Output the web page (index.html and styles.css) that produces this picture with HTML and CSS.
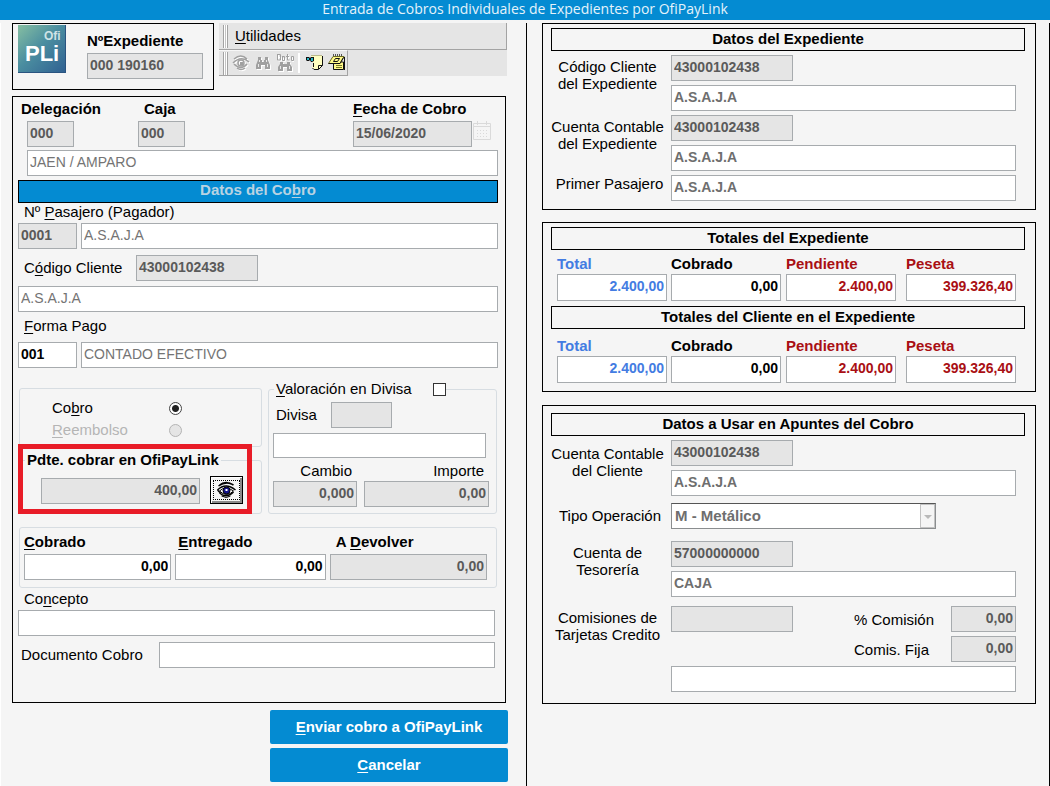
FILE: index.html
```html
<!DOCTYPE html>
<html lang="es">
<head>
<meta charset="utf-8">
<meta name="viewport" content="width=device-width, initial-scale=1">
<title>Entrada de Cobros Individuales de Expedientes por OfiPayLink</title>
<link rel="stylesheet" href="styles.css">
</head>
<body>
<header class="titlebar"><h1>Entrada de Cobros Individuales de Expedientes por OfiPayLink</h1></header>
<main class="window">
  <section class="left">
    <div class="top">
      <div class="panel file">
        <svg class="logo" width="48" height="48" viewBox="0 0 48 48" role="img" aria-label="Ofi PLi">
          <defs>
            <linearGradient id="logo-bg" x1="0" y1="0" x2="1" y2="1">
              <stop offset="0" stop-color="#86bfa2"/><stop offset=".45" stop-color="#4b8ea0"/><stop offset="1" stop-color="#2f5f91"/>
            </linearGradient>
          </defs>
          <rect width="48" height="48" fill="url(#logo-bg)"/>
          <path d="M0 47.500H47.500V0" fill="none" stroke="#2a5480"/>
          <text class="logo-small" x="26" y="15">Ofi</text>
          <text class="logo-big" x="7" y="36">PLi</text>
        </svg>
        <div class="file-field">
          <label class="strong" for="expediente">NºExpediente</label>
          <input class="box gray" id="expediente" value="000 190160" readonly>
        </div>
      </div>
      <div class="toolbars">
        <div class="menubar"><span class="grip"></span><button class="menu" type="button"><u>U</u>tilidades</button></div>
        <div class="toolbar">
          <span class="grip"></span>
          <button class="tool" type="button" aria-label="Ver" disabled>
            <svg width="18" height="18" viewBox="0 0 18 18" fill="none" stroke-width="1.500">
              <g stroke="#fff" transform="translate(1 1)"><path d="M2 5Q9-1 15 5M1 9Q9 1 17 8M2 10Q9 17 15 10M5 14Q9 17 13 14"/><circle cx="9" cy="9" r="3"/></g>
              <g stroke="#a0a0a0"><path d="M2 5Q9-1 15 5M1 9Q9 1 17 8M2 10Q9 17 15 10M5 14Q9 17 13 14"/><circle cx="9" cy="9" r="3"/></g>
              <path d="M8 8h3v3H8z" fill="#a0a0a0"/>
            </svg>
          </button>
          <button class="tool" type="button" aria-label="Buscar" disabled>
            <svg width="18" height="18" viewBox="0 0 18 18">
              <path d="M4 3h3v3h1v2h2V6h1V3h3v3l2 5v4h-5v-4H7v4H2v-4l2-5z" fill="#fff" transform="translate(1 1)"/>
              <path d="M4 3h3v3h1v2h2V6h1V3h3v3l2 5v4h-5v-4H7v4H2v-4l2-5z" fill="#a0a0a0"/>
              <path d="M5.500 6v2M4.500 10v3M12.500 6v2M13.500 10v3" stroke="#e8e8e8"/>
            </svg>
          </button>
          <button class="tool" type="button" aria-label="Buscar dato" disabled>
            <svg width="18" height="18" viewBox="0 0 18 18" fill="none">
              <g stroke="#fff" transform="translate(1 1)"><path d="M1.500 0v6h3V2.500h-3M6.500 3v3.500h2V3.500h-2M11.500 0v6h2M10 2.500h3M15.500 2.500h2v4h-2z"/></g>
              <path d="M1.500 0v6h3V.500h-3M6.500 2v4.500h2V2.500h-2M11.500 0v6h2M10 2.500h3M15.500 2.500h2v4h-2z" stroke="#a0a0a0"/>
              <path d="M4 8h3v2h4V8h3v2l2 3v4h-5v-4H7v4H2v-4l2-3z" fill="#fff" transform="translate(1 1)"/>
              <path d="M4 8h3v2h4V8h3v2l2 3v4h-5v-4H7v4H2v-4l2-3z" fill="#a0a0a0"/>
              <path d="M4.500 12v3M13.500 12v3" stroke="#e8e8e8"/>
            </svg>
          </button>
          <span class="divider"></span>
          <button class="tool" type="button" aria-label="Ver nota">
            <svg width="18" height="18" viewBox="0 0 18 18">
              <path d="M5 2h11v9l-3 4H8l-2-2 1-3z" fill="#ffffc0"/>
              <path d="M5 1.500h11" stroke="#b9b98c"/>
              <path d="M16.500 2v9.500l-4 4H8L6.500 14M12.500 15v-3.500h4M7.500 9v4" fill="none" stroke="#111"/>
              <path d="M0 3h3l1 1 1-1h3v4L6 8H5L4 6 3 7H1L0 6z" fill="#111"/>
              <path d="M1 4h2v2H1zM5 4h2v3H5z" fill="#27b8c4"/>
            </svg>
          </button>
          <button class="tool" type="button" aria-label="Notas">
            <svg width="18" height="18" viewBox="0 0 18 18">
              <path d="M5.500 8h10v7.500h-10z" fill="#fff98a" stroke="#111"/>
              <path d="M5 2.500h11l-4 7H.500z" fill="#fff98a" stroke="#6b6b20"/>
              <path d="M.500 9.500H12l3.500-6" fill="none" stroke="#111"/>
              <path d="M7.500 4.500h4l-2 3h-4z" fill="none" stroke="#111"/>
              <path d="M8 11.500h6M8 13.500h6" stroke="#77772a"/>
              <path d="M5.500 0v2M7.500 0v2M9.500 0v2M11.500 0v2M13.500 0v2" stroke="#555"/>
              <path d="M16.500 3v13" stroke="#111"/>
            </svg>
          </button>
        </div>
      </div>
    </div>

    <form class="panel form" id="cobro-form">
      <div class="head">
        <div>
          <label class="strong head-label" for="delegacion">Delegación</label>
          <input class="box gray code indent" id="delegacion" value="000" readonly>
        </div>
        <div>
          <label class="strong head-label wide" for="caja">Caja</label>
          <input class="box gray code" id="caja" value="000" readonly>
        </div>
        <div>
          <label class="strong head-label flush" for="fecha"><u>F</u>echa de Cobro</label>
          <div class="date">
            <input class="box gray" id="fecha" value="15/06/2020" readonly>
            <button class="calendar" type="button" aria-label="Calendario" disabled>
              <svg width="18" height="20" viewBox="0 0 18 20" fill="none" stroke="#dadada">
                <path d="M.5 2.500h17v16H.5zM.5 5.500h17M4.500 0v4M13.500 0v4"/>
                <path d="M4 9.500h11M4 12.500h11M4 15.500h11" stroke-dasharray="1 2"/>
              </svg>
            </button>
          </div>
        </div>
      </div>
      <div class="office"><input class="box soft" aria-label="Nombre de la delegación" value="JAEN / AMPARO" readonly></div>
      <h2 class="bar">Datos del Co<u>b</u>ro</h2>
      <label class="caption" for="pasajero">Nº <u>P</u>asajero (Pagador)</label>
      <div class="pair">
        <input class="box gray" id="pasajero" value="0001" readonly>
        <input class="box soft" aria-label="Nombre del pasajero" value="A.S.A.J.A" readonly>
      </div>
      <div class="client">
        <label for="cliente">C<u>ó</u>digo Cliente</label>
        <input class="box gray account" id="cliente" value="43000102438" readonly>
      </div>
      <input class="box soft" aria-label="Nombre del cliente" value="A.S.A.J.A" readonly>
      <label class="caption pay" for="forma"><u>F</u>orma Pago</label>
      <div class="pair">
        <input class="box" id="forma" value="001">
        <input class="box soft" aria-label="Descripción de la forma de pago" value="CONTADO EFECTIVO" readonly>
      </div>

      <div class="groups">
        <div class="stack">
          <div class="group kinds" role="radiogroup" aria-label="Tipo">
            <label for="tipo-cobro">Co<u>b</u>ro</label>
            <input class="radio" type="radio" name="tipo" id="tipo-cobro" checked>
            <label class="off" for="tipo-reembolso"><u>R</u>eembolso</label>
            <input class="radio" type="radio" name="tipo" id="tipo-reembolso" disabled>
          </div>
          <fieldset class="group pending">
            <legend><label class="strong" for="pendiente">Pdte. cobrar en OfiPayLink</label></legend>
            <div class="pending-row">
              <input class="box gray num" id="pendiente" value="400,00" readonly>
              <button class="eye" type="button" aria-label="Ver pendiente">
                <svg width="20" height="18" viewBox="0 0 20 18" fill="none" stroke="#000">
                  <path d="M3 4Q9-1 17 4M2 5Q9 0 15 3" stroke-width="1.500"/>
                  <path d="M1 9Q9 1 19 9M3 12Q10 18 17 11M1 9l3 3" stroke-width="1.500"/>
                  <path d="M3 10Q9 4 17 10Q10 17 3 10z" fill="#fff"/>
                  <circle cx="10" cy="9.500" r="3.500" fill="#14148c"/>
                  <path d="M9 8h2v2H9z" fill="#fff" stroke="none"/>
                  <path d="M5 15Q10 18 14 15"/>
                </svg>
              </button>
            </div>
            <span class="highlight"></span>
          </fieldset>
        </div>
        <fieldset class="group currency">
          <legend class="toggle"><label for="valoracion"><u>V</u>aloración en Divisa</label><input class="check" type="checkbox" id="valoracion"></legend>
          <div class="currency-code"><label for="divisa">Divisa</label><input class="box gray" id="divisa" readonly></div>
          <input class="box currency-name" aria-label="Nombre de la divisa">
          <div class="rates">
            <div><label for="cambio">Cambio</label><input class="box gray num" id="cambio" value="0,000" readonly></div>
            <div><label for="importe">Importe</label><input class="box gray num" id="importe" value="0,00" readonly></div>
          </div>
        </fieldset>
      </div>

      <div class="group amounts">
        <div><label class="strong" for="cobrado"><u>C</u>obrado</label><input class="box num" id="cobrado" value="0,00"></div>
        <div><label class="strong inset" for="entregado"><u>E</u>ntregado</label><input class="box num" id="entregado" value="0,00"></div>
        <div><label class="strong inset-more" for="devolver">A <u>D</u>evolver</label><input class="box gray num" id="devolver" value="0,00" readonly></div>
      </div>

      <div class="notes">
        <label class="concept" for="concepto">Co<u>n</u>cepto</label>
        <input class="box" id="concepto">
        <div class="document"><label for="documento">Documento Cobro</label><input class="box" id="documento"></div>
      </div>
    </form>

    <div class="actions">
      <button class="action" type="submit" form="cobro-form"><u>E</u>nviar cobro a OfiPayLink</button>
      <button class="action" type="button"><u>C</u>ancelar</button>
    </div>
  </section>

  <section class="right">
    <div class="panel block">
      <h2 class="title">Datos del Expediente</h2>
      <div class="rows">
        <label class="two" for="exp-cliente">Código Cliente<br>del Expediente</label>
        <div class="stacked">
          <input class="box gray account" id="exp-cliente" value="43000102438" readonly>
          <input class="box dim" aria-label="Nombre del cliente del expediente" value="A.S.A.J.A" readonly>
        </div>
        <label class="two" for="exp-cuenta">Cuenta Contable<br>del Expediente</label>
        <div class="stacked">
          <input class="box gray account" id="exp-cuenta" value="43000102438" readonly>
          <input class="box dim" aria-label="Nombre de la cuenta" value="A.S.A.J.A" readonly>
        </div>
        <label class="one" for="primer">Primer Pasajero</label>
        <input class="box dim" id="primer" value="A.S.A.J.A" readonly>
      </div>
    </div>

    <div class="panel block totals-block">
      <h2 class="title">Totales del Expediente</h2>
      <div class="totals">
        <div class="blue"><label for="t1">Total</label><input class="box tall num" id="t1" value="2.400,00" readonly></div>
        <div><label for="t2">Cobrado</label><input class="box tall num" id="t2" value="0,00" readonly></div>
        <div class="red"><label for="t3">Pendiente</label><input class="box tall num" id="t3" value="2.400,00" readonly></div>
        <div class="red"><label for="t4">Peseta</label><input class="box tall num" id="t4" value="399.326,40" readonly></div>
      </div>
      <h2 class="title second">Totales del Cliente en el Expediente</h2>
      <div class="totals">
        <div class="blue"><label for="c1">Total</label><input class="box tall num" id="c1" value="2.400,00" readonly></div>
        <div><label for="c2">Cobrado</label><input class="box tall num" id="c2" value="0,00" readonly></div>
        <div class="red"><label for="c3">Pendiente</label><input class="box tall num" id="c3" value="2.400,00" readonly></div>
        <div class="red"><label for="c4">Peseta</label><input class="box tall num" id="c4" value="399.326,40" readonly></div>
      </div>
    </div>

    <div class="panel block entries">
      <h2 class="title">Datos a Usar en Apuntes del Cobro</h2>
      <div class="rows">
        <label class="two" for="ap-cuenta">Cuenta Contable<br>del Cliente</label>
        <div class="stacked">
          <input class="box gray account" id="ap-cuenta" value="43000102438" readonly>
          <input class="box dim" aria-label="Nombre del cliente" value="A.S.A.J.A" readonly>
        </div>
      </div>
      <div class="rows operation">
        <label class="one" for="tipo-op">Tipo Operación</label>
        <div class="combo">
          <select id="tipo-op" disabled><option>M - Metálico</option></select>
          <span class="arrow"></span>
        </div>
      </div>
      <div class="rows treasury">
        <label class="two" for="tesoreria">Cuenta de<br>Tesorería</label>
        <div class="stacked">
          <input class="box gray account" id="tesoreria" value="57000000000" readonly>
          <input class="box dim" aria-label="Nombre de la cuenta de tesorería" value="CAJA" readonly>
        </div>
      </div>
      <div class="rows fees">
        <label class="two" for="comisiones">Comisiones de<br>Tarjetas Credito</label>
        <div class="stacked">
          <div class="fee"><input class="box gray account" id="comisiones" readonly><label for="pct">% Comisión</label><input class="box gray num rate" id="pct" value="0,00" readonly></div>
          <div class="fee"><label for="fija">Comis. Fija</label><input class="box gray num rate" id="fija" value="0,00" readonly></div>
          <input class="box" aria-label="Descripción de comisiones" readonly>
        </div>
      </div>
    </div>
  </section>
</main>
</body>
</html>
```
FILE: styles.css
```css
*, *::before, *::after { box-sizing: border-box; }

body {
  margin: 0;
  min-height: 100vh;
  display: flex;
  flex-direction: column;
  background: #f5f5f5;
  color: #000;
  font: 15px/18px "Liberation Sans", Arial, sans-serif;
}

input, button, select { font: inherit; color: inherit; margin: 0; }
h1, h2 { margin: 0; font-size: 15px; }
u { text-underline-offset: 2px; text-decoration-thickness: 1px; }
.strong { font-weight: bold; }

.titlebar { background: #048bd2; height: 20px; }
.titlebar h1 {
  color: #e4f3fb;
  font: 14px/18px "Open Sans", "Noto Sans", sans-serif;
  text-align: center;
}

.window {
  flex: 1;
  margin-top: 3px;
  display: grid;
  grid-template-columns: 526fr 524fr;
}
.left { padding: 0 18px 4px 11px; border-left: 1px solid #fff; }
.right {
  padding: 0 13px 0 15px;
  border: solid #000;
  border-width: 0 1px;
}

.panel { border: 1px solid #000; }

/* Text boxes */
.box {
  display: block;
  width: 100%;
  min-width: 0;
  height: 26px;
  padding: 0 2px 3px;
  border: 1px solid #a7abae;
  border-radius: 0;
  background: #fff;
  font-size: 14px;
  font-weight: bold;
  outline: 0;
}
.gray { background: #e5e5e5; color: #5a5a5a; }
.soft { color: #747474; font-weight: normal; }
.dim { color: #6e6e6e; }
.num { text-align: right; }
.tall { height: 27px; }
.account { width: 122px; }

/* Header row */
.top { display: flex; align-items: flex-start; gap: 5px; margin-right: 1px; }
.file { display: flex; gap: 21px; width: 202px; height: 67px; padding: 1px 10px 0 5px; }
.logo { flex: none; }
.logo text { fill: #fff; font-family: "Liberation Sans", Arial, sans-serif; }
.logo .logo-small { font-size: 12px; font-weight: bold; fill: #cfe3e6; }
.logo-big { font-size: 22px; font-weight: bold; }
.file-field { flex: 1; min-width: 0; padding-top: 7px; }
.file-field label { display: block; line-height: 18px; margin-bottom: 3px; }

.toolbars { flex: 1; background: #e5e5e5; }
.menubar, .toolbar { display: flex; align-items: center; border: solid #a3a3a3; border-width: 0 1px 1px 0; padding-left: 4px; }
.menubar { height: 27px; }
.toolbar { width: 129px; height: 26px; gap: 3px; border-top: 1px solid #f7f7f7; }
.grip {
  flex: none;
  width: 5px;
  height: 23px;
  border: solid #a3a3a3;
  border-width: 0 1px;
  background: linear-gradient(to right, #fff 1px, #e5e5e5 1px, #a3a3a3 2px, #fff 2px);
}
.menu { padding: 0 7px; border: 0; background: none; }
.tool { flex: none; width: 19px; height: 20px; padding: 0; border: 0; background: none; }
.toolbar .grip { margin-right: 1px; }
.tool svg, .eye svg, .calendar svg { display: block; }
.divider { width: 2px; height: 20px; border: solid; border-width: 0 1px; border-color: #a3a3a3 #fff; margin-right: 3px; }

/* Payment form */
.form { margin: 6px 2px 0 0; padding: 0 7px 34px 5px; }
.head { display: grid; grid-template-columns: 120px 1fr 145px; }
.head-label { display: block; line-height: 24px; padding-left: 3px; }
.head-label.wide { padding-left: 6px; }
.head-label.flush { padding-left: 0; }
.code { width: 47px; }
.indent { margin-left: 9px; }
.date { display: flex; gap: 1px; }
.date .box { width: 119px; }
.calendar { width: 18px; height: 20px; padding: 0; border: 0; background: none; }
.office { padding: 3px 0 4px 9px; }
.bar {
  height: 23px;
  border: 1px solid #000;
  background: #048bd2;
  color: #b9d3e2;
  line-height: 18px;
  text-align: center;
}
.caption { display: block; padding-left: 6px; line-height: 18px; margin-bottom: 2px; }
.caption.pay { padding-top: 5px; margin-bottom: 7px; }
.pair { display: grid; grid-template-columns: 59px 1fr; gap: 4px; }
.client { display: grid; grid-template-columns: 112px 1fr; align-items: center; padding: 6px 0 5px 6px; }

.group { min-width: 0; margin: 0; border: 1px solid #d7dde2; border-radius: 3px; }
.groups { display: grid; grid-template-columns: 243fr 229fr; gap: 6px; margin: 12px 1px 13px; }
.stack { display: flex; flex-direction: column; gap: 4px; padding-top: 8px; }
.kinds {
  display: grid;
  grid-template-columns: 117px 1fr;
  align-items: center;
  padding: 8px 0 5px 32px;
  line-height: 22px;
}
.radio {
  appearance: none;
  width: 13px;
  height: 13px;
  border: 1px solid #444;
  border-radius: 50%;
  background: #fff;
}
.radio:checked { background: radial-gradient(circle, #222 3px, #fff 4px); }
.radio:disabled { background: #e5e5e5; border-color: #b4b4b4; }
.off { color: #b5b5b5; }

.pending { position: relative; padding: 0 18px 9px 5px; }
.pending legend { padding: 0 2px; }
.pending-row { display: flex; align-items: flex-end; gap: 10px; padding: 7px 0 0 16px; }
.pending-row .box { flex: 1; margin-bottom: 0; }
.eye {
  flex: none;
  width: 33px;
  height: 28px;
  padding: 2px;
  border: 1px solid #000;
  background: #f5f5f5;
  box-shadow: inset 1px 1px #fff, inset -2px -2px #8b8b8b;
}
.eye svg { width: 100%; height: 20px; border: 1px dotted #000; }
.highlight {
  position: absolute;
  inset: -25px 9px -1px -2px;
  border: 5px solid #e81c27;
  pointer-events: none;
}

.currency { padding: 0 7px 6px 4px; }
.toggle { display: flex; align-items: center; gap: 21px; margin-left: 1px; padding: 0 0 0 2px; }
.check { appearance: none; width: 13px; height: 13px; border: 1px solid #333; background: #fff; }
.currency-code { display: grid; grid-template-columns: 55px 61px; align-items: center; padding: 4px 0 5px 3px; }
.currency-name { width: calc(100% - 3px); height: 25px; }
.rates { display: grid; grid-template-columns: 84fr 125fr; gap: 7px; }
.rates label { display: block; padding: 3px 5px 0 0; line-height: 20px; text-align: right; }

.amounts { display: grid; grid-template-columns: 147fr 150fr 157fr; gap: 4px; margin: 0 1px; padding: 5px 9px 7px 4px; }
.amounts label { display: block; margin-bottom: 3px; }
.amounts .inset { padding-left: 3px; }
.amounts .inset-more { padding-left: 6px; }

.notes { padding-right: 3px; }
.concept { display: block; padding-left: 6px; line-height: 22px; }
.document { display: grid; grid-template-columns: 138px 1fr; align-items: center; margin-top: 6px; padding-left: 3px; }

.actions { display: grid; justify-content: end; grid-template-columns: 238px; gap: 4px; margin-top: 7px; }
.action { height: 34px; border: 0; border-radius: 2px; background: #048bd2; color: #fff; font-weight: bold; }

/* Right column */
.block { padding: 4px 10px 8px 8px; margin-bottom: 12px; }
.title { height: 23px; border: 1px solid #000; line-height: 19px; text-align: center; }
.rows {
  display: grid;
  grid-template-columns: 120px 1fr;
  row-gap: 4px;
  margin-top: 4px;
  padding-right: 9px;
}
.rows > label { text-align: center; padding-right: 7px; line-height: 17px; }
.rows > .two { padding-top: 3px; }
.rows > .one { padding-right: 3px; line-height: 18px; }
.stacked { display: grid; gap: 4px; }

.totals-block { margin-bottom: 13px; }
.totals { display: grid; grid-template-columns: 114fr 115fr 120fr 110fr; padding: 5px 9px 0 6px; font-weight: bold; }
.totals label { display: block; margin-bottom: 1px; }
.totals > :nth-child(1) { padding-right: 4px; }
.totals > :nth-child(2) { padding-right: 5px; }
.totals > :nth-child(3) { padding-right: 10px; }
.second { margin-top: 5px; }
.second + .totals { padding-top: 8px; }
.blue { color: #437ce2; }
.red { color: #a90f14; }

.entries { padding-top: 7px; padding-bottom: 11px; margin-bottom: 0; }
.entries .two { padding-top: 5px; }
.operation { margin-top: 7px; }
.operation > .one { line-height: 26px; padding-right: 2px; }
.combo { position: relative; max-width: 265px; }
.combo select {
  display: block;
  appearance: none;
  width: 100%;
  height: 26px;
  padding: 0 20px 0 3px;
  border: 1px solid #8a8d8f;
  border-top-color: #555;
  border-radius: 0;
  background: #fff;
  color: #6e6e6e;
  font-weight: bold;
  opacity: 1;
}
.arrow {
  position: absolute;
  top: 1px;
  right: 1px;
  bottom: 1px;
  width: 15px;
  border: 1px solid #c2c2c2;
  background: #f5f5f5;
  pointer-events: none;
}
.arrow::before {
  content: "";
  position: absolute;
  top: 10px;
  left: 3px;
  border: solid transparent;
  border-width: 4px 4px 0;
  border-top-color: #b9b9b9;
}
.treasury { margin-top: 12px; }
.entries .treasury > .two { padding-top: 3px; }
.fees { margin-top: 9px; }
.entries .fees > .two { padding-top: 3px; }
.fee { display: flex; align-items: center; }
.fee label { width: 97px; margin-left: auto; padding-top: 2px; }
.fee .rate { width: 65px; }
```
